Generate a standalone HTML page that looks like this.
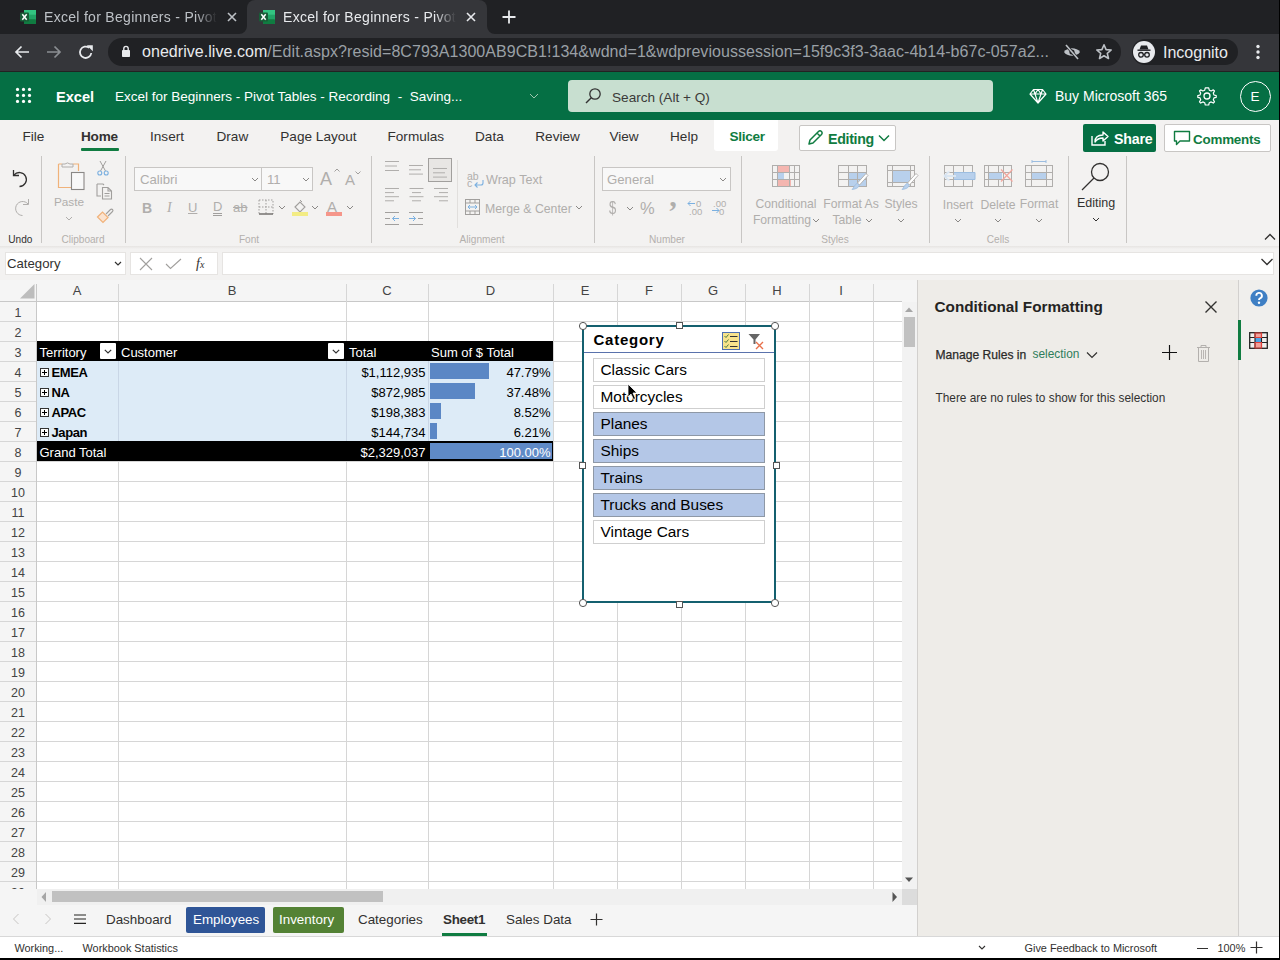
<!DOCTYPE html>
<html><head><meta charset="utf-8"><style>
html,body{margin:0;padding:0;}
body{width:1280px;height:960px;position:relative;overflow:hidden;background:#fff;font-family:"Liberation Sans",sans-serif;}
.a{position:absolute;white-space:nowrap;line-height:1;}
svg.a{overflow:visible}
</style></head><body>
<div class="a" style="left:0px;top:0px;width:1280px;height:34px;background:#202124;"></div>
<div class="a" style="left:0px;top:34px;width:1280px;height:38px;background:#35363a;"></div>
<div class="a" style="left:247px;top:0px;width:240px;height:34px;background:#35363a;border-radius:8px 8px 0 0;top:0px"></div>
<svg class="a" style="left:239px;top:26px;" width="8" height="8" viewBox="0 0 8 8"><path d="M0 8 A8 8 0 0 0 8 0 V8 Z" fill="#35363a"/></svg>
<svg class="a" style="left:487px;top:26px;" width="8" height="8" viewBox="0 0 8 8"><path d="M8 8 A8 8 0 0 1 0 0 V8 Z" fill="#35363a"/></svg>
<svg class="a" style="left:20px;top:9px;" width="16" height="16" viewBox="0 0 16 16"><rect x="4" y="1" width="12" height="14" rx="1.5" fill="#21a366"/><rect x="4" y="1" width="12" height="4.7" fill="#33c481"/><rect x="4" y="10.3" width="12" height="4.7" rx="1" fill="#107c41"/><rect x="0" y="3.5" width="9" height="9" rx="1" fill="#185c37"/><path d="M2.3 5.3 L6.7 10.7 M6.7 5.3 L2.3 10.7" stroke="#fff" stroke-width="1.5"/></svg>
<svg class="a" style="left:259px;top:9px;" width="16" height="16" viewBox="0 0 16 16"><rect x="4" y="1" width="12" height="14" rx="1.5" fill="#21a366"/><rect x="4" y="1" width="12" height="4.7" fill="#33c481"/><rect x="4" y="10.3" width="12" height="4.7" rx="1" fill="#107c41"/><rect x="0" y="3.5" width="9" height="9" rx="1" fill="#185c37"/><path d="M2.3 5.3 L6.7 10.7 M6.7 5.3 L2.3 10.7" stroke="#fff" stroke-width="1.5"/></svg>
<div class="a" style="left:44px;top:8px;font-size:14px;line-height:18px;color:#bdc1c6;width:173px;overflow:hidden;white-space:nowrap;letter-spacing:0.3px;-webkit-mask-image:linear-gradient(90deg,#000 88%,transparent)">Excel for Beginners - Pivot Tables</div>
<div class="a" style="left:283px;top:8px;font-size:14px;line-height:18px;color:#e8eaed;width:173px;overflow:hidden;white-space:nowrap;letter-spacing:0.3px;-webkit-mask-image:linear-gradient(90deg,#000 88%,transparent)">Excel for Beginners - Pivot Tables</div>
<svg class="a" style="left:225px;top:10px;" width="14" height="14" viewBox="0 0 14 14"><path d="M3 3 L11 11 M11 3 L3 11" stroke="#bdc1c6" stroke-width="1.6"/></svg>
<svg class="a" style="left:464px;top:10px;" width="14" height="14" viewBox="0 0 14 14"><path d="M3 3 L11 11 M11 3 L3 11" stroke="#e8eaed" stroke-width="1.6"/></svg>
<svg class="a" style="left:501px;top:9px;" width="16" height="16" viewBox="0 0 16 16"><path d="M8 1.5 V14.5 M1.5 8 H14.5" stroke="#e8eaed" stroke-width="1.8"/></svg>
<svg class="a" style="left:13px;top:43px;" width="18" height="18" viewBox="0 0 18 18"><path d="M16 9 H3 M8.5 3.5 L3 9 L8.5 14.5" stroke="#e8eaed" stroke-width="1.7" fill="none"/></svg>
<svg class="a" style="left:45px;top:43px;" width="18" height="18" viewBox="0 0 18 18"><path d="M2 9 H15 M9.5 3.5 L15 9 L9.5 14.5" stroke="#8b8e92" stroke-width="1.7" fill="none"/></svg>
<svg class="a" style="left:77px;top:43px;" width="18" height="18" viewBox="0 0 18 18"><path d="M14.3 10 A5.7 5.7 0 1 1 12.2 4.8" stroke="#e8eaed" stroke-width="1.8" fill="none"/><path d="M9.8 2.2 H15.8 V8.2 Z" fill="#e8eaed"/></svg>
<div class="a" style="left:108px;top:38px;width:1013px;height:28px;background:#202124;border-radius:14px"></div>
<svg class="a" style="left:120px;top:44px;" width="12" height="14" viewBox="0 0 12 14"><rect x="2" y="6" width="8" height="7" rx="0.8" fill="#e8eaed"/><path d="M3.8 6.5 V4.6 A2.2 2.2 0 0 1 8.2 4.6 V6.5" stroke="#e8eaed" stroke-width="1.4" fill="none"/></svg>
<div class="a" style="left:142px;top:42px;font-size:16px;line-height:20px;white-space:nowrap;color:#9aa0a6;letter-spacing:0.05px"><span style="color:#e8eaed">onedrive.live.com</span>/Edit.aspx?resid=8C793A1300AB9CB1!134&amp;wdnd=1&amp;wdprevioussession=15f9c3f3-3aac-4b14-b67c-057a2...</div>
<svg class="a" style="left:1062px;top:43px;" width="20" height="18" viewBox="0 0 20 18"><path d="M2 9 C5 4 15 4 18 9 C15 14 5 14 2 9 Z" fill="#bdc1c6"/><circle cx="10" cy="9" r="2.6" fill="#202124"/><path d="M4 2 L16 16" stroke="#202124" stroke-width="3"/><path d="M4 2 L16 16" stroke="#bdc1c6" stroke-width="1.6"/></svg>
<svg class="a" style="left:1095px;top:43px;" width="18" height="18" viewBox="0 0 18 18"><path d="M9 1.8 L11.1 6.6 L16.2 7 L12.3 10.4 L13.5 15.5 L9 12.8 L4.5 15.5 L5.7 10.4 L1.8 7 L6.9 6.6 Z" stroke="#bdc1c6" stroke-width="1.6" fill="none" stroke-linejoin="round"/></svg>
<div class="a" style="left:1132px;top:39px;width:106px;height:26px;background:#202124;border-radius:13px"></div>
<svg class="a" style="left:1133px;top:41px;" width="22" height="22" viewBox="0 0 22 22"><circle cx="11" cy="11" r="11" fill="#e8eaed"/><path d="M6.5 8.5 L8 4.5 H14 L15.5 8.5 Z" fill="#202124"/><rect x="4.5" y="8.5" width="13" height="1.4" fill="#202124"/><circle cx="8" cy="13.8" r="2.3" stroke="#202124" stroke-width="1.3" fill="none"/><circle cx="14" cy="13.8" r="2.3" stroke="#202124" stroke-width="1.3" fill="none"/><path d="M10.3 13.5 H11.7" stroke="#202124" stroke-width="1.2"/></svg>
<div class="a " style="left:1163px;top:44.5px;font-size:16px;color:#e8eaed;font-weight:400;">Incognito</div>
<svg class="a" style="left:1254px;top:43px;" width="8" height="18" viewBox="0 0 8 18"><circle cx="4" cy="3.5" r="1.7" fill="#e8eaed"/><circle cx="4" cy="9" r="1.7" fill="#e8eaed"/><circle cx="4" cy="14.5" r="1.7" fill="#e8eaed"/></svg>
<div class="a" style="left:0px;top:72px;width:1280px;height:48px;background:#056f44;"></div>
<div class="a" style="left:0px;top:71px;width:1280px;height:1px;background:#222;"></div>
<svg class="a" style="left:15px;top:87px;" width="17" height="17" viewBox="0 0 17 17"><circle cx="2.5" cy="2.4" r="1.6" fill="#fff"/><circle cx="2.5" cy="8.4" r="1.6" fill="#fff"/><circle cx="2.5" cy="14.4" r="1.6" fill="#fff"/><circle cx="8.5" cy="2.4" r="1.6" fill="#fff"/><circle cx="8.5" cy="8.4" r="1.6" fill="#fff"/><circle cx="8.5" cy="14.4" r="1.6" fill="#fff"/><circle cx="14.5" cy="2.4" r="1.6" fill="#fff"/><circle cx="14.5" cy="8.4" r="1.6" fill="#fff"/><circle cx="14.5" cy="14.4" r="1.6" fill="#fff"/></svg>
<div class="a " style="left:56px;top:89.6px;font-size:14.6px;color:#fff;font-weight:700;">Excel</div>
<div class="a " style="left:115px;top:89.6px;font-size:13.5px;color:#fff;font-weight:400;white-space:nowrap">Excel for Beginners - Pivot Tables - Recording &nbsp;- &nbsp;Saving...</div>
<svg class="a" style="left:529px;top:93px;" width="10" height="6" viewBox="0 0 10 6"><path d="M1 1 L5 5 L9 1" stroke="#9cc7ad" stroke-width="1" fill="none"/></svg>
<div class="a" style="left:568px;top:80px;width:425px;height:32px;background:#c8dfd0;border-radius:4px"></div>
<svg class="a" style="left:584px;top:87px;" width="18" height="18" viewBox="0 0 18 18"><circle cx="11" cy="7" r="5.2" stroke="#333" stroke-width="1.3" fill="none"/><path d="M7.3 10.7 L2 16" stroke="#333" stroke-width="1.4"/></svg>
<div class="a " style="left:612px;top:90.5px;font-size:13.6px;color:#3b3a39;font-weight:400;">Search (Alt + Q)</div>
<svg class="a" style="left:1029px;top:87px;" width="18" height="18" viewBox="0 0 18 18"><path d="M4.5 2.5 H13.5 L17 7 L9 16 L1 7 Z M1 7 H17 M6 7 L9 16 L12 7 M4.5 2.5 L6 7 L9 2.5 L12 7 L13.5 2.5" stroke="#fff" stroke-width="1.2" fill="none" stroke-linejoin="round"/></svg>
<div class="a " style="left:1055px;top:89.1px;font-size:14px;color:#fff;font-weight:400;">Buy Microsoft 365</div>
<svg class="a" style="left:1197px;top:86px;" width="20" height="20" viewBox="0 0 20 20"><circle cx="10" cy="10" r="3" stroke="#fff" stroke-width="1.3" fill="none"/><path d="M10 1.8 L11.7 1.9 L12.3 4.2 L14.2 5 L16.3 3.8 L17.5 5 L16.3 7.1 L17 9 L19.2 9.6 V11.3 L17 11.9 L16.3 13.8 L17.5 15.9 L16.3 17.1 L14.2 15.9 L12.3 16.7 L11.7 19 H10 H8.3 L7.7 16.7 L5.8 15.9 L3.7 17.1 L2.5 15.9 L3.7 13.8 L3 11.9 L0.8 11.3 V9.6 L3 9 L3.7 7.1 L2.5 5 L3.7 3.8 L5.8 5 L7.7 4.2 L8.3 1.9 Z" stroke="#fff" stroke-width="1.2" fill="none" stroke-linejoin="round"/></svg>
<div class="a" style="left:1239.5px;top:80.5px;width:31px;height:31px;background:transparent;border:1.3px solid #fff;border-radius:50%;box-sizing:border-box"></div>
<div class="a" style="left:1105px;width:300px;text-align:center;top:90.1px;font-size:13.5px;color:#fff;font-weight:400;">E</div>
<div class="a" style="left:0px;top:120px;width:1280px;height:160px;background:#f3f2f1;"></div>
<div class="a " style="left:22.5px;top:130.0px;font-size:13.6px;color:#323130;font-weight:400;">File</div>
<div class="a " style="left:81px;top:130.0px;font-size:13.6px;color:#323130;font-weight:700;letter-spacing:-0.2px">Home</div>
<div class="a " style="left:150px;top:130.0px;font-size:13.6px;color:#323130;font-weight:400;">Insert</div>
<div class="a " style="left:216.5px;top:130.0px;font-size:13.6px;color:#323130;font-weight:400;">Draw</div>
<div class="a " style="left:280.3px;top:130.0px;font-size:13.6px;color:#323130;font-weight:400;">Page Layout</div>
<div class="a " style="left:387.5px;top:130.0px;font-size:13.6px;color:#323130;font-weight:400;">Formulas</div>
<div class="a " style="left:475px;top:130.0px;font-size:13.6px;color:#323130;font-weight:400;">Data</div>
<div class="a " style="left:535.3px;top:130.0px;font-size:13.6px;color:#323130;font-weight:400;">Review</div>
<div class="a " style="left:609.4px;top:130.0px;font-size:13.6px;color:#323130;font-weight:400;">View</div>
<div class="a " style="left:670px;top:130.0px;font-size:13.6px;color:#323130;font-weight:400;">Help</div>
<div class="a" style="left:81px;top:148px;width:38px;height:3px;background:#107c41;border-radius:1px"></div>
<div class="a" style="left:714px;top:120px;width:64px;height:31px;background:#fff;border-radius:0 0 3px 3px"></div>
<div class="a " style="left:729.5px;top:130.0px;font-size:13.6px;color:#107c41;font-weight:700;letter-spacing:-0.3px">Slicer</div>
<div class="a" style="left:799px;top:125px;width:97px;height:26px;background:#fff;border:1px solid #c8c6c4;border-radius:2px;box-sizing:border-box"></div>
<svg class="a" style="left:806px;top:129px;" width="18" height="18" viewBox="0 0 18 18"><path d="M3 15 L4 11 L12.5 2.5 A1.6 1.6 0 0 1 15.5 5.5 L7 14 Z M11 4 L14 7" stroke="#107c41" stroke-width="1.5" fill="none" stroke-linejoin="round"/></svg>
<div class="a " style="left:828px;top:132.0px;font-size:14.2px;color:#107c41;font-weight:700;letter-spacing:-0.3px">Editing</div>
<svg class="a" style="left:878px;top:134px;" width="12" height="8" viewBox="0 0 12 8"><path d="M1 1.5 L6 6.5 L11 1.5" stroke="#107c41" stroke-width="1.5" fill="none"/></svg>
<div class="a" style="left:1083px;top:124px;width:73px;height:28px;background:#056f44;border-radius:2px"></div>
<svg class="a" style="left:1090px;top:129px;" width="20" height="18" viewBox="0 0 20 18"><path d="M2 7 V16 H15 V12" stroke="#fff" stroke-width="1.4" fill="none"/><path d="M5 13 C5 8 8 6 13 6 V3 L18 7.5 L13 12 V9 C9 9 7 10 5 13 Z" stroke="#fff" stroke-width="1.4" fill="none" stroke-linejoin="round"/></svg>
<div class="a " style="left:1114px;top:132.0px;font-size:14.2px;color:#fff;font-weight:700;letter-spacing:-0.2px">Share</div>
<div class="a" style="left:1164px;top:124px;width:107px;height:28px;background:#fff;border:1px solid #c8c6c4;border-radius:2px;box-sizing:border-box"></div>
<svg class="a" style="left:1173px;top:129px;" width="18" height="18" viewBox="0 0 18 18"><path d="M1.5 2.5 H16.5 V12 H7 L3.5 15.5 V12 H1.5 Z" stroke="#107c41" stroke-width="1.4" fill="none" stroke-linejoin="round"/></svg>
<div class="a " style="left:1193px;top:132.7px;font-size:13.4px;color:#107c41;font-weight:700;letter-spacing:-0.2px">Comments</div>
<div class="a" style="left:41px;top:156px;width:1px;height:87px;background:#c8c6c4;"></div>
<div class="a" style="left:125px;top:156px;width:1px;height:87px;background:#c8c6c4;"></div>
<div class="a" style="left:371px;top:156px;width:1px;height:87px;background:#c8c6c4;"></div>
<div class="a" style="left:594px;top:156px;width:1px;height:87px;background:#c8c6c4;"></div>
<div class="a" style="left:741px;top:156px;width:1px;height:87px;background:#c8c6c4;"></div>
<div class="a" style="left:929px;top:156px;width:1px;height:87px;background:#c8c6c4;"></div>
<div class="a" style="left:1068px;top:156px;width:1px;height:87px;background:#c8c6c4;"></div>
<div class="a" style="left:1126px;top:156px;width:1px;height:87px;background:#c8c6c4;"></div>
<div class="a" style="left:457px;top:160px;width:1px;height:68px;background:#e1dfdd;"></div>
<div class="a " style="left:8.3px;top:234.5px;font-size:10.1px;color:#323130;font-weight:400;">Undo</div>
<div class="a" style="left:-67px;width:300px;text-align:center;top:234.5px;font-size:10.1px;color:#b3b0ad;font-weight:400;">Clipboard</div>
<div class="a" style="left:99px;width:300px;text-align:center;top:234.5px;font-size:10.1px;color:#b3b0ad;font-weight:400;">Font</div>
<div class="a" style="left:332px;width:300px;text-align:center;top:234.5px;font-size:10.1px;color:#b3b0ad;font-weight:400;">Alignment</div>
<div class="a" style="left:517px;width:300px;text-align:center;top:234.5px;font-size:10.1px;color:#b3b0ad;font-weight:400;">Number</div>
<div class="a" style="left:685px;width:300px;text-align:center;top:234.5px;font-size:10.1px;color:#b3b0ad;font-weight:400;">Styles</div>
<div class="a" style="left:848px;width:300px;text-align:center;top:234.5px;font-size:10.1px;color:#b3b0ad;font-weight:400;">Cells</div>
<svg class="a" style="left:1264px;top:233px;" width="12" height="8" viewBox="0 0 12 8"><path d="M1 6.5 L6 1.5 L11 6.5" stroke="#323130" stroke-width="1.3" fill="none"/></svg>
<svg class="a" style="left:10px;top:168px;" width="22" height="22" viewBox="0 0 22 22"><path d="M3.5 2 V7.5 H9" stroke="#323130" stroke-width="1.3" fill="none"/><path d="M4 7 A7 7 0 1 1 9.5 18.5" stroke="#323130" stroke-width="1.3" fill="none"/></svg>
<svg class="a" style="left:10px;top:197px;" width="22" height="22" viewBox="0 0 22 22"><path d="M18.5 2 V7.5 H13" stroke="#b0aeac" stroke-width="1" fill="none"/><path d="M18 7 A7 7 0 1 0 12.5 18.5" stroke="#b0aeac" stroke-width="1" fill="none"/></svg>
<svg class="a" style="left:56px;top:158px;" width="32" height="33" viewBox="0 0 32 33"><path d="M2.5 6 H6 M17 6 H22.5 V13" stroke="#f0b27a" stroke-width="1.2" fill="none"/><path d="M2.5 6 V29.5 H15" stroke="#f0b27a" stroke-width="1.2" fill="none"/><path d="M6 9 V6 H9 A3.5 3 0 0 1 14 6 H17 V9 Z" stroke="#b0aeac" stroke-width="1" fill="#f3f2f1"/><rect x="15.5" y="14.5" width="12.5" height="17" stroke="#8a8886" stroke-width="1.1" fill="#f8f8f8"/></svg>
<div class="a" style="left:-81px;width:300px;text-align:center;top:197.0px;font-size:11.8px;color:#b0aeac;font-weight:400;">Paste</div>
<svg class="a" style="left:65px;top:216px;" width="8" height="5" viewBox="0 0 8 5"><path d="M1 1 L4 4 L7 1" stroke="#b0aeac" stroke-width="1" fill="none"/></svg>
<svg class="a" style="left:96px;top:160px;" width="14" height="16" viewBox="0 0 14 16"><path d="M4 1 L9.5 11 M10 1 L4.5 11" stroke="#a19f9d" stroke-width="1"/><circle cx="3.8" cy="13" r="2" stroke="#7bb0e0" stroke-width="1.1" fill="none"/><circle cx="10.2" cy="13" r="2" stroke="#7bb0e0" stroke-width="1.1" fill="none"/></svg>
<svg class="a" style="left:96px;top:183px;" width="18" height="17" viewBox="0 0 18 17"><path d="M1 1 H7 L8 2 M1 1 V13 H5" stroke="#a19f9d" stroke-width="1.1" fill="none"/><path d="M6.5 4.5 H12 L15.5 8 V16 H6.5 Z M12 4.5 V8 H15.5 M8.5 10.5 H13.5 M8.5 13 H13.5" stroke="#a19f9d" stroke-width="1.1" fill="none"/></svg>
<svg class="a" style="left:96px;top:206px;" width="18" height="17" viewBox="0 0 18 17"><path d="M10 8 L14.5 3.5 A1.4 1.4 0 0 1 16.5 5.5 L12 10" stroke="#a19f9d" stroke-width="1.1" fill="none"/><path d="M1.5 11 L6.5 6 L12 11.5 L7 16.5 Z" stroke="#f0b27a" stroke-width="1.2" fill="#fbe3cf"/></svg>
<div class="a" style="left:134px;top:167px;width:179px;height:24px;background:#f8f8f8;border:1px solid #c8c6c4;box-sizing:border-box"></div>
<div class="a" style="left:261px;top:168px;width:1px;height:22px;background:#c8c6c4;"></div>
<div class="a " style="left:140px;top:172.8px;font-size:13.2px;color:#b0aeac;font-weight:400;">Calibri</div>
<div class="a " style="left:267px;top:172.8px;font-size:13.2px;color:#b0aeac;font-weight:400;">11</div>
<svg class="a" style="left:251px;top:177px;" width="8" height="5" viewBox="0 0 8 5"><path d="M1 1 L4 4 L7 1" stroke="#8a8886" stroke-width="1" fill="none"/></svg>
<svg class="a" style="left:302px;top:177px;" width="8" height="5" viewBox="0 0 8 5"><path d="M1 1 L4 4 L7 1" stroke="#8a8886" stroke-width="1" fill="none"/></svg>
<div class="a " style="left:320px;top:169.8px;font-size:18px;color:#b0aeac;font-weight:400;">A</div>
<svg class="a" style="left:334px;top:168px;" width="6" height="4" viewBox="0 0 6 4"><path d="M0.5 3.5 L3 1 L5.5 3.5" stroke="#a19f9d" fill="none"/></svg>
<div class="a " style="left:345px;top:172.3px;font-size:15px;color:#b0aeac;font-weight:400;">A</div>
<svg class="a" style="left:355px;top:171px;" width="6" height="4" viewBox="0 0 6 4"><path d="M0.5 0.5 L3 3 L5.5 0.5" stroke="#a19f9d" fill="none"/></svg>
<div class="a " style="left:142px;top:201.1px;font-size:14px;color:#b0aeac;font-weight:700;">B</div>
<div class="a " style="left:167px;top:201.1px;font-size:14px;color:#b0aeac;font-weight:400;font-style:italic;font-family:&quot;Liberation Serif&quot;">I</div>
<div class="a " style="left:188px;top:201.0px;font-size:13px;color:#b0aeac;font-weight:400;text-decoration:underline">U</div>
<div class="a " style="left:213px;top:201.0px;font-size:13px;color:#b0aeac;font-weight:400;border-bottom:3px double #a19f9d;line-height:12px">D</div>
<div class="a " style="left:233px;top:201.0px;font-size:13px;color:#b0aeac;font-weight:400;text-decoration:line-through">ab</div>
<svg class="a" style="left:258px;top:199px;" width="16" height="16" viewBox="0 0 16 16"><path d="M1 1 H15 V15 M1 1 V15 M8 1 V15 M1 8 H15" stroke="#a19f9d" stroke-width="1" stroke-dasharray="1.5 1.5" fill="none"/><path d="M1 15 H15" stroke="#605e5c" stroke-width="1.3"/></svg>
<svg class="a" style="left:278px;top:205px;" width="8" height="5" viewBox="0 0 8 5"><path d="M1 1 L4 4 L7 1" stroke="#8a8886" stroke-width="1" fill="none"/></svg>
<svg class="a" style="left:291px;top:198px;" width="18" height="18" viewBox="0 0 18 18"><path d="M4 9 L9 4 L14 9 L9 14 Z" stroke="#a19f9d" stroke-width="1.1" fill="none"/><path d="M9 2 L11 4" stroke="#a19f9d"/><rect x="1" y="14" width="16" height="4" fill="#f3ec85"/></svg>
<svg class="a" style="left:311px;top:205px;" width="8" height="5" viewBox="0 0 8 5"><path d="M1 1 L4 4 L7 1" stroke="#8a8886" stroke-width="1" fill="none"/></svg>
<div class="a " style="left:327px;top:199.3px;font-size:15px;color:#b0aeac;font-weight:400;">A</div>
<div class="a" style="left:326px;top:212px;width:16px;height:4px;background:#f5968a;"></div>
<svg class="a" style="left:346px;top:205px;" width="8" height="5" viewBox="0 0 8 5"><path d="M1 1 L4 4 L7 1" stroke="#8a8886" stroke-width="1" fill="none"/></svg>
<svg class="a" style="left:385px;top:161px;" width="16" height="15.5" viewBox="0 0 16 15.5"><path d="M0 0.5 H14" stroke="#b0aeac" stroke-width="1"/><path d="M0 5.0 H12" stroke="#b0aeac" stroke-width="1"/><path d="M0 9.5 H14" stroke="#b0aeac" stroke-width="1"/></svg>
<svg class="a" style="left:409px;top:165px;" width="16" height="14.899999999999999" viewBox="0 0 16 14.899999999999999"><path d="M0 0.5 H14" stroke="#b0aeac" stroke-width="1"/><path d="M0 4.8 H12" stroke="#b0aeac" stroke-width="1"/><path d="M0 9.1 H14" stroke="#b0aeac" stroke-width="1"/></svg>
<div class="a" style="left:428px;top:158px;width:24px;height:24px;background:#e8e6e4;border:1px solid #a19f9d;box-sizing:border-box"></div>
<svg class="a" style="left:433px;top:168px;" width="16" height="14.899999999999999" viewBox="0 0 16 14.899999999999999"><path d="M0 0.5 H14" stroke="#b0aeac" stroke-width="1"/><path d="M0 4.8 H12" stroke="#b0aeac" stroke-width="1"/><path d="M0 9.1 H14" stroke="#b0aeac" stroke-width="1"/></svg>
<svg class="a" style="left:385px;top:188px;" width="16" height="18.4" viewBox="0 0 16 18.4"><path d="M0 0.5 H14" stroke="#b0aeac" stroke-width="1"/><path d="M0 4.6 H9" stroke="#b0aeac" stroke-width="1"/><path d="M0 8.7 H14" stroke="#b0aeac" stroke-width="1"/><path d="M0 12.799999999999999 H9" stroke="#b0aeac" stroke-width="1"/></svg>
<svg class="a" style="left:409px;top:188px;" width="16" height="18.4" viewBox="0 0 16 18.4"><path d="M0.5 0.5 H14.5" stroke="#b0aeac" stroke-width="1"/><path d="M3.0 4.6 H12.0" stroke="#b0aeac" stroke-width="1"/><path d="M0.5 8.7 H14.5" stroke="#b0aeac" stroke-width="1"/><path d="M3.0 12.799999999999999 H12.0" stroke="#b0aeac" stroke-width="1"/></svg>
<svg class="a" style="left:433px;top:188px;" width="16" height="18.4" viewBox="0 0 16 18.4"><path d="M1 0.5 H15" stroke="#b0aeac" stroke-width="1"/><path d="M6 4.6 H15" stroke="#b0aeac" stroke-width="1"/><path d="M1 8.7 H15" stroke="#b0aeac" stroke-width="1"/><path d="M6 12.799999999999999 H15" stroke="#b0aeac" stroke-width="1"/></svg>
<svg class="a" style="left:385px;top:212px;" width="16" height="14" viewBox="0 0 16 14"><path d="M0 0.5 H14 M0 6.5 H5 M0 12.5 H14" stroke="#a19f9d"/><path d="M14 6.5 H7.5 M10 4 L7.5 6.5 L10 9" stroke="#7bb0e0" fill="none"/></svg>
<svg class="a" style="left:409px;top:212px;" width="16" height="14" viewBox="0 0 16 14"><path d="M0 0.5 H14 M9 6.5 H14 M0 12.5 H14" stroke="#a19f9d"/><path d="M0 6.5 H6.5 M4 4 L6.5 6.5 L4 9" stroke="#7bb0e0" fill="none"/></svg>
<div class="a " style="left:467px;top:170.6px;font-size:10.5px;color:#b0aeac;font-weight:400;">ab</div>
<div class="a " style="left:467px;top:177.6px;font-size:10.5px;color:#b0aeac;font-weight:400;">c</div>
<svg class="a" style="left:473px;top:179px;" width="12" height="9" viewBox="0 0 12 9"><path d="M10 1 V4 A2 2 0 0 1 8 6 H2 M4.5 3.5 L2 6 L4.5 8.5" stroke="#7bb0e0" stroke-width="1.1" fill="none"/></svg>
<div class="a " style="left:486px;top:174.3px;font-size:12.6px;color:#b0aeac;font-weight:400;">Wrap Text</div>
<svg class="a" style="left:465px;top:199px;" width="16" height="17" viewBox="0 0 16 17"><rect x="0.5" y="0.5" width="14" height="15" stroke="#a19f9d" fill="none"/><path d="M0.5 4 H14.5 M0.5 12 H14.5 M5 0.5 V4 M10 0.5 V4 M5 12 V15.5 M10 12 V15.5" stroke="#a19f9d"/><path d="M3 8 H12 M5 6 L3 8 L5 10 M10 6 L12 8 L10 10" stroke="#7bb0e0" fill="none"/></svg>
<div class="a " style="left:485px;top:202.6px;font-size:12.3px;color:#b0aeac;font-weight:400;">Merge &amp; Center</div>
<svg class="a" style="left:575px;top:205px;" width="8" height="5" viewBox="0 0 8 5"><path d="M1 1 L4 4 L7 1" stroke="#8a8886" stroke-width="1" fill="none"/></svg>
<div class="a" style="left:602px;top:167px;width:129px;height:24px;background:#f8f8f8;border:1px solid #c8c6c4;box-sizing:border-box"></div>
<div class="a " style="left:607px;top:172.8px;font-size:13.2px;color:#b0aeac;font-weight:400;">General</div>
<svg class="a" style="left:719px;top:177px;" width="8" height="5" viewBox="0 0 8 5"><path d="M1 1 L4 4 L7 1" stroke="#8a8886" stroke-width="1" fill="none"/></svg>
<div class="a " style="left:609px;top:199.3px;font-size:18px;color:#b0aeac;font-weight:400;transform:scaleX(0.72);transform-origin:left">$</div>
<svg class="a" style="left:626px;top:206px;" width="8" height="5" viewBox="0 0 8 5"><path d="M1 1 L4 4 L7 1" stroke="#8a8886" stroke-width="1" fill="none"/></svg>
<div class="a " style="left:640px;top:199.5px;font-size:16.5px;color:#b0aeac;font-weight:400;">%</div>
<div class="a " style="left:668px;top:180.6px;font-size:30px;color:#b0aeac;font-weight:700;font-family:&quot;Liberation Serif&quot;">‚</div>
<svg class="a" style="left:687px;top:199px;" width="18" height="17" viewBox="0 0 18 17"><path d="M1 4.5 H8 M3.5 2 L1 4.5 L3.5 7" stroke="#7bb0e0" fill="none"/></svg>
<div class="a " style="left:696px;top:199.0px;font-size:9.5px;color:#b0aeac;font-weight:400;">0</div>
<div class="a " style="left:689px;top:207.0px;font-size:9.5px;color:#b0aeac;font-weight:400;">.00</div>
<div class="a " style="left:713px;top:199.0px;font-size:9.5px;color:#b0aeac;font-weight:400;">.00</div>
<div class="a " style="left:719px;top:207.0px;font-size:9.5px;color:#b0aeac;font-weight:400;">0</div>
<svg class="a" style="left:711px;top:206px;" width="10" height="9" viewBox="0 0 10 9"><path d="M1 4.5 H8 M5.5 2 L8 4.5 L5.5 7" stroke="#7bb0e0" fill="none"/></svg>
<svg class="a" style="left:772px;top:165px;" width="28" height="23" viewBox="0 0 28 23"><rect x="5" y="0" width="12" height="7" fill="#f4b6b0"/><rect x="5" y="15" width="14" height="7" fill="#f4b6b0"/><rect x="5" y="7" width="7" height="7.5" fill="#b8d0ec"/><rect x="0.5" y="0.5" width="27" height="21" fill="none" stroke="#b0aeac"/><path d="M5.5 0 V22 M17.5 0 V22 M22.5 0 V22 M0 7.5 H28 M0 14.5 H28" stroke="#b0aeac"/></svg>
<div class="a" style="left:636px;width:300px;text-align:center;top:197.7px;font-size:12.2px;color:#b0aeac;font-weight:400;">Conditional</div>
<div class="a" style="left:632px;width:300px;text-align:center;top:213.7px;font-size:12.2px;color:#b0aeac;font-weight:400;">Formatting</div>
<svg class="a" style="left:812px;top:218px;" width="8" height="5" viewBox="0 0 8 5"><path d="M1 1 L4 4 L7 1" stroke="#8a8886" stroke-width="1" fill="none"/></svg>
<svg class="a" style="left:838px;top:165px;" width="32" height="28" viewBox="0 0 32 28"><rect x="10" y="7" width="18" height="15" fill="#b8d0ec"/><rect x="0.5" y="0.5" width="28" height="21" fill="none" stroke="#b0aeac"/><path d="M10.5 0 V22" stroke="#b0aeac"/><path d="M19.5 0 V22" stroke="#b0aeac"/><path d="M0 7.5 H29" stroke="#b0aeac"/><path d="M0 14.5 H29" stroke="#b0aeac"/><g transform="translate(16,8)"><path d="M12 0.5 L14 2.5 L5.5 12 L3.5 10 Z" fill="#fff" stroke="#b0aeac" stroke-width="0.9"/><path d="M3.2 10.3 L5.3 12.3 C4.5 15 2 16 -2 16.5 C0 15 0 12 3.2 10.3 Z" fill="#b8d0ec" stroke="#9cbde0" stroke-width="0.8"/></g></svg>
<div class="a" style="left:701px;width:300px;text-align:center;top:197.7px;font-size:12.2px;color:#b0aeac;font-weight:400;">Format As</div>
<div class="a" style="left:697px;width:300px;text-align:center;top:213.7px;font-size:12.2px;color:#b0aeac;font-weight:400;">Table</div>
<svg class="a" style="left:865px;top:218px;" width="8" height="5" viewBox="0 0 8 5"><path d="M1 1 L4 4 L7 1" stroke="#8a8886" stroke-width="1" fill="none"/></svg>
<svg class="a" style="left:887px;top:165px;" width="32" height="28" viewBox="0 0 32 28"><rect x="5" y="5" width="18" height="12" fill="#b8d0ec"/><rect x="0.5" y="0.5" width="27" height="21" fill="none" stroke="#b0aeac"/><path d="M5.5 0 V22" stroke="#b0aeac"/><path d="M23.5 0 V22" stroke="#b0aeac"/><path d="M0 5.5 H28" stroke="#b0aeac"/><path d="M0 17.5 H28" stroke="#b0aeac"/><g transform="translate(17,8)"><path d="M12 0.5 L14 2.5 L5.5 12 L3.5 10 Z" fill="#fff" stroke="#b0aeac" stroke-width="0.9"/><path d="M3.2 10.3 L5.3 12.3 C4.5 15 2 16 -2 16.5 C0 15 0 12 3.2 10.3 Z" fill="#b8d0ec" stroke="#9cbde0" stroke-width="0.8"/></g></svg>
<div class="a" style="left:751px;width:300px;text-align:center;top:197.7px;font-size:12.2px;color:#b0aeac;font-weight:400;">Styles</div>
<svg class="a" style="left:897px;top:218px;" width="8" height="5" viewBox="0 0 8 5"><path d="M1 1 L4 4 L7 1" stroke="#8a8886" stroke-width="1" fill="none"/></svg>
<svg class="a" style="left:944px;top:165px;" width="32" height="22" viewBox="0 0 32 22"><rect x="0.5" y="0.5" width="28" height="21" fill="none" stroke="#b0aeac"/><path d="M9.5 0 V22" stroke="#b0aeac"/><path d="M19.5 0 V22" stroke="#b0aeac"/><path d="M0 7.5 H29" stroke="#b0aeac"/><path d="M0 14.5 H29" stroke="#b0aeac"/><rect x="10" y="8" width="21" height="6" fill="#b8d0ec"/><path d="M10 7.5 H31 V14.5 H10" fill="none" stroke="#9cbde0"/><path d="M1 11 H12 M5 6.5 L0.5 11 L5 15.5" stroke="#e6eef7" stroke-width="2.2" fill="none"/><path d="M1 11 H12 M5 6.5 L0.5 11 L5 15.5" stroke="#c9d9ea" stroke-width="0.8" fill="none"/></svg>
<div class="a" style="left:808px;width:300px;text-align:center;top:198.7px;font-size:12.2px;color:#b0aeac;font-weight:400;">Insert</div>
<svg class="a" style="left:954px;top:218px;" width="8" height="5" viewBox="0 0 8 5"><path d="M1 1 L4 4 L7 1" stroke="#8a8886" stroke-width="1" fill="none"/></svg>
<svg class="a" style="left:984px;top:165px;" width="32" height="22" viewBox="0 0 32 22"><rect x="0.5" y="0.5" width="27" height="21" fill="none" stroke="#b0aeac"/><path d="M4.5 0 V22" stroke="#b0aeac"/><path d="M14.5 0 V22" stroke="#b0aeac"/><path d="M19.5 0 V22" stroke="#b0aeac"/><path d="M0 7.5 H28" stroke="#b0aeac"/><path d="M0 14.5 H28" stroke="#b0aeac"/><rect x="5" y="8" width="13" height="6" fill="#b8d0ec"/><path d="M17 4.5 L28.5 16.5 M28.5 4.5 L17 16.5" stroke="#f3a59c" stroke-width="1.1"/></svg>
<div class="a" style="left:848px;width:300px;text-align:center;top:198.7px;font-size:12.2px;color:#b0aeac;font-weight:400;">Delete</div>
<svg class="a" style="left:994px;top:218px;" width="8" height="5" viewBox="0 0 8 5"><path d="M1 1 L4 4 L7 1" stroke="#8a8886" stroke-width="1" fill="none"/></svg>
<svg class="a" style="left:1025px;top:160px;" width="29" height="28" viewBox="0 0 29 28"><path d="M7 1.5 H21 M7 0 V3 M21 0 V3" stroke="#9cbde0"/><g transform="translate(0,5)"><rect x="7" y="7" width="14" height="7" fill="#b8d0ec"/><rect x="0.5" y="0.5" width="27" height="21" fill="none" stroke="#b0aeac"/><path d="M6.5 0 V22" stroke="#b0aeac"/><path d="M21.5 0 V22" stroke="#b0aeac"/><path d="M0 7.5 H28" stroke="#b0aeac"/><path d="M0 14.5 H28" stroke="#b0aeac"/></g></svg>
<div class="a" style="left:889px;width:300px;text-align:center;top:197.7px;font-size:12.2px;color:#b0aeac;font-weight:400;">Format</div>
<svg class="a" style="left:1035px;top:218px;" width="8" height="5" viewBox="0 0 8 5"><path d="M1 1 L4 4 L7 1" stroke="#8a8886" stroke-width="1" fill="none"/></svg>
<svg class="a" style="left:1080px;top:161px;" width="32" height="32" viewBox="0 0 32 32"><circle cx="20" cy="11" r="8.5" stroke="#323130" stroke-width="1.3" fill="none"/><path d="M14 17 L2 29" stroke="#323130" stroke-width="1.3"/></svg>
<div class="a" style="left:946px;width:300px;text-align:center;top:197.4px;font-size:12.5px;color:#323130;font-weight:400;">Editing</div>
<svg class="a" style="left:1092px;top:217px;" width="8" height="5" viewBox="0 0 8 5"><path d="M1 1 L4 4 L7 1" stroke="#323130" stroke-width="1" fill="none"/></svg>
<div class="a" style="left:0px;top:246px;width:1280px;height:3px;background:linear-gradient(#e6e4e2,#f3f2f1);"></div>
<div class="a" style="left:5px;top:252px;width:121px;height:23px;background:#fff;border:1px solid #e6e4e2;box-sizing:border-box"></div>
<div class="a " style="left:7px;top:257.3px;font-size:13.2px;color:#323130;font-weight:400;">Category</div>
<svg class="a" style="left:114px;top:261px;" width="8" height="6" viewBox="0 0 8 6"><path d="M1 1 L4 4 L7 1" stroke="#323130" stroke-width="1.2" fill="none"/></svg>
<div class="a" style="left:130px;top:252px;width:88px;height:23px;background:#fff;border:1px solid #e6e4e2;box-sizing:border-box"></div>
<svg class="a" style="left:139px;top:257px;" width="14" height="14" viewBox="0 0 14 14"><path d="M1 1 L13 13 M13 1 L1 13" stroke="#a19f9d" stroke-width="1.1"/></svg>
<svg class="a" style="left:165px;top:258px;" width="17" height="12" viewBox="0 0 17 12"><path d="M1 6 L5.5 10.5 L16 1" stroke="#a19f9d" stroke-width="1.1" fill="none"/></svg>
<div class="a " style="left:196px;top:256.6px;font-size:14px;color:#323130;font-weight:400;font-style:italic;font-family:&quot;Liberation Serif&quot;">f<span style="font-size:10px">x</span></div>
<div class="a" style="left:222px;top:252px;width:1052px;height:23px;background:#fff;border:1px solid #e6e4e2;box-sizing:border-box"></div>
<svg class="a" style="left:1260px;top:257px;" width="14" height="10" viewBox="0 0 14 10"><path d="M1.5 2 L7 7.5 L12.5 2" stroke="#323130" stroke-width="1.3" fill="none"/></svg>
<div class="a" style="left:0px;top:280px;width:917px;height:609px;background:#f5f5f5;"></div>
<div class="a" style="left:37px;top:302px;width:865px;height:587px;background:#fff;"></div>
<div class="a" style="left:0px;top:302px;width:902px;height:587px;background:repeating-linear-gradient(180deg,transparent 0,transparent 19px,#d6d6d6 19px,#d6d6d6 20px);"></div>
<div class="a" style="left:0px;top:301px;width:902px;height:1px;background:#c8c8c8;"></div>
<div class="a" style="left:36px;top:284px;width:1px;height:605px;background:#c8c8c8;"></div>
<div class="a" style="left:118px;top:284px;width:1px;height:605px;background:#d6d6d6;"></div>
<div class="a" style="left:346px;top:284px;width:1px;height:605px;background:#d6d6d6;"></div>
<div class="a" style="left:428px;top:284px;width:1px;height:605px;background:#d6d6d6;"></div>
<div class="a" style="left:553px;top:284px;width:1px;height:605px;background:#d6d6d6;"></div>
<div class="a" style="left:617px;top:284px;width:1px;height:605px;background:#d6d6d6;"></div>
<div class="a" style="left:681px;top:284px;width:1px;height:605px;background:#d6d6d6;"></div>
<div class="a" style="left:745px;top:284px;width:1px;height:605px;background:#d6d6d6;"></div>
<div class="a" style="left:809px;top:284px;width:1px;height:605px;background:#d6d6d6;"></div>
<div class="a" style="left:873px;top:284px;width:1px;height:605px;background:#d6d6d6;"></div>
<svg class="a" style="left:20px;top:284px;" width="15" height="15" viewBox="0 0 15 15"><path d="M14.5 0 V14.5 H0 Z" fill="#bdbdbd"/></svg>
<div class="a" style="left:-73px;width:300px;text-align:center;top:283.8px;font-size:13px;color:#444;font-weight:400;">A</div>
<div class="a" style="left:82px;width:300px;text-align:center;top:283.8px;font-size:13px;color:#444;font-weight:400;">B</div>
<div class="a" style="left:237px;width:300px;text-align:center;top:283.8px;font-size:13px;color:#444;font-weight:400;">C</div>
<div class="a" style="left:340.5px;width:300px;text-align:center;top:283.8px;font-size:13px;color:#444;font-weight:400;">D</div>
<div class="a" style="left:435px;width:300px;text-align:center;top:283.8px;font-size:13px;color:#444;font-weight:400;">E</div>
<div class="a" style="left:499px;width:300px;text-align:center;top:283.8px;font-size:13px;color:#444;font-weight:400;">F</div>
<div class="a" style="left:563px;width:300px;text-align:center;top:283.8px;font-size:13px;color:#444;font-weight:400;">G</div>
<div class="a" style="left:627px;width:300px;text-align:center;top:283.8px;font-size:13px;color:#444;font-weight:400;">H</div>
<div class="a" style="left:691px;width:300px;text-align:center;top:283.8px;font-size:13px;color:#444;font-weight:400;">I</div>
<div class="a" style="left:-132px;width:300px;text-align:center;top:306.6px;font-size:12.5px;color:#444;font-weight:400;">1</div>
<div class="a" style="left:-132px;width:300px;text-align:center;top:326.6px;font-size:12.5px;color:#444;font-weight:400;">2</div>
<div class="a" style="left:-132px;width:300px;text-align:center;top:346.6px;font-size:12.5px;color:#444;font-weight:400;">3</div>
<div class="a" style="left:-132px;width:300px;text-align:center;top:366.6px;font-size:12.5px;color:#444;font-weight:400;">4</div>
<div class="a" style="left:-132px;width:300px;text-align:center;top:386.6px;font-size:12.5px;color:#444;font-weight:400;">5</div>
<div class="a" style="left:-132px;width:300px;text-align:center;top:406.6px;font-size:12.5px;color:#444;font-weight:400;">6</div>
<div class="a" style="left:-132px;width:300px;text-align:center;top:426.6px;font-size:12.5px;color:#444;font-weight:400;">7</div>
<div class="a" style="left:-132px;width:300px;text-align:center;top:446.6px;font-size:12.5px;color:#444;font-weight:400;">8</div>
<div class="a" style="left:-132px;width:300px;text-align:center;top:466.6px;font-size:12.5px;color:#444;font-weight:400;">9</div>
<div class="a" style="left:-132px;width:300px;text-align:center;top:486.6px;font-size:12.5px;color:#444;font-weight:400;">10</div>
<div class="a" style="left:-132px;width:300px;text-align:center;top:506.6px;font-size:12.5px;color:#444;font-weight:400;">11</div>
<div class="a" style="left:-132px;width:300px;text-align:center;top:526.6px;font-size:12.5px;color:#444;font-weight:400;">12</div>
<div class="a" style="left:-132px;width:300px;text-align:center;top:546.6px;font-size:12.5px;color:#444;font-weight:400;">13</div>
<div class="a" style="left:-132px;width:300px;text-align:center;top:566.6px;font-size:12.5px;color:#444;font-weight:400;">14</div>
<div class="a" style="left:-132px;width:300px;text-align:center;top:586.6px;font-size:12.5px;color:#444;font-weight:400;">15</div>
<div class="a" style="left:-132px;width:300px;text-align:center;top:606.6px;font-size:12.5px;color:#444;font-weight:400;">16</div>
<div class="a" style="left:-132px;width:300px;text-align:center;top:626.6px;font-size:12.5px;color:#444;font-weight:400;">17</div>
<div class="a" style="left:-132px;width:300px;text-align:center;top:646.6px;font-size:12.5px;color:#444;font-weight:400;">18</div>
<div class="a" style="left:-132px;width:300px;text-align:center;top:666.6px;font-size:12.5px;color:#444;font-weight:400;">19</div>
<div class="a" style="left:-132px;width:300px;text-align:center;top:686.6px;font-size:12.5px;color:#444;font-weight:400;">20</div>
<div class="a" style="left:-132px;width:300px;text-align:center;top:706.6px;font-size:12.5px;color:#444;font-weight:400;">21</div>
<div class="a" style="left:-132px;width:300px;text-align:center;top:726.6px;font-size:12.5px;color:#444;font-weight:400;">22</div>
<div class="a" style="left:-132px;width:300px;text-align:center;top:746.6px;font-size:12.5px;color:#444;font-weight:400;">23</div>
<div class="a" style="left:-132px;width:300px;text-align:center;top:766.6px;font-size:12.5px;color:#444;font-weight:400;">24</div>
<div class="a" style="left:-132px;width:300px;text-align:center;top:786.6px;font-size:12.5px;color:#444;font-weight:400;">25</div>
<div class="a" style="left:-132px;width:300px;text-align:center;top:806.6px;font-size:12.5px;color:#444;font-weight:400;">26</div>
<div class="a" style="left:-132px;width:300px;text-align:center;top:826.6px;font-size:12.5px;color:#444;font-weight:400;">27</div>
<div class="a" style="left:-132px;width:300px;text-align:center;top:846.6px;font-size:12.5px;color:#444;font-weight:400;">28</div>
<div class="a" style="left:-132px;width:300px;text-align:center;top:866.6px;font-size:12.5px;color:#444;font-weight:400;">29</div>
<div class="a" style="left:-132px;width:300px;text-align:center;top:886.6px;font-size:12.5px;color:#444;font-weight:400;">30</div>
<div class="a" style="left:0px;top:889px;width:917px;height:16px;background:#f5f5f5;"></div>
<div class="a" style="left:37px;top:341px;width:516px;height:20px;background:#000;"></div>
<div class="a" style="left:37px;top:361px;width:516px;height:80px;background:#ddebf7;"></div>
<div class="a" style="left:37px;top:441px;width:516px;height:20px;background:#000;"></div>
<div class="a" style="left:118px;top:361px;width:1px;height:80px;background:#c9d6e6;"></div>
<div class="a" style="left:346px;top:361px;width:1px;height:80px;background:#c9d6e6;"></div>
<div class="a" style="left:428px;top:361px;width:1px;height:80px;background:#c9d6e6;"></div>
<div class="a " style="left:39.5px;top:345.7px;font-size:13px;color:#fff;font-weight:400;">Territory</div>
<div class="a " style="left:121px;top:345.7px;font-size:13px;color:#fff;font-weight:400;">Customer</div>
<div class="a " style="left:349px;top:345.7px;font-size:13px;color:#fff;font-weight:400;">Total</div>
<div class="a " style="left:431px;top:345.7px;font-size:13px;color:#fff;font-weight:400;">Sum of $ Total</div>
<div class="a" style="left:100px;top:343px;width:16px;height:16px;background:#fff;border-radius:1px"></div>
<svg class="a" style="left:104px;top:349px;" width="8" height="5" viewBox="0 0 8 5"><path d="M0.8 0.8 L4 4 L7.2 0.8" stroke="#333" stroke-width="1.2" fill="none"/></svg>
<div class="a" style="left:328px;top:343px;width:16px;height:16px;background:#fff;border-radius:1px"></div>
<svg class="a" style="left:332px;top:349px;" width="8" height="5" viewBox="0 0 8 5"><path d="M0.8 0.8 L4 4 L7.2 0.8" stroke="#333" stroke-width="1.2" fill="none"/></svg>
<div class="a" style="left:40px;top:368px;width:9px;height:9px;background:#fff;border:1px solid #333;box-sizing:border-box"></div>
<svg class="a" style="left:40px;top:368px;" width="9" height="9" viewBox="0 0 9 9"><path d="M4.5 2 V7 M2 4.5 H7" stroke="#000" stroke-width="1"/></svg>
<div class="a " style="left:51.5px;top:365.7px;font-size:13px;color:#000;font-weight:700;letter-spacing:-0.4px">EMEA</div>
<div class="a" style="right:854.5px;top:365.7px;font-size:13px;color:#000;font-weight:400;">$1,112,935</div>
<div class="a" style="left:430px;top:363px;width:59px;height:16px;background:#5b87c5;"></div>
<div class="a" style="right:729.5px;top:365.7px;font-size:13px;color:#000;font-weight:400;">47.79%</div>
<div class="a" style="left:40px;top:388px;width:9px;height:9px;background:#fff;border:1px solid #333;box-sizing:border-box"></div>
<svg class="a" style="left:40px;top:388px;" width="9" height="9" viewBox="0 0 9 9"><path d="M4.5 2 V7 M2 4.5 H7" stroke="#000" stroke-width="1"/></svg>
<div class="a " style="left:51.5px;top:385.7px;font-size:13px;color:#000;font-weight:700;letter-spacing:-0.4px">NA</div>
<div class="a" style="right:854.5px;top:385.7px;font-size:13px;color:#000;font-weight:400;">$872,985</div>
<div class="a" style="left:430px;top:383px;width:45px;height:16px;background:#5b87c5;"></div>
<div class="a" style="right:729.5px;top:385.7px;font-size:13px;color:#000;font-weight:400;">37.48%</div>
<div class="a" style="left:40px;top:408px;width:9px;height:9px;background:#fff;border:1px solid #333;box-sizing:border-box"></div>
<svg class="a" style="left:40px;top:408px;" width="9" height="9" viewBox="0 0 9 9"><path d="M4.5 2 V7 M2 4.5 H7" stroke="#000" stroke-width="1"/></svg>
<div class="a " style="left:51.5px;top:405.7px;font-size:13px;color:#000;font-weight:700;letter-spacing:-0.4px">APAC</div>
<div class="a" style="right:854.5px;top:405.7px;font-size:13px;color:#000;font-weight:400;">$198,383</div>
<div class="a" style="left:430px;top:403px;width:11px;height:16px;background:#5b87c5;"></div>
<div class="a" style="right:729.5px;top:405.7px;font-size:13px;color:#000;font-weight:400;">8.52%</div>
<div class="a" style="left:40px;top:428px;width:9px;height:9px;background:#fff;border:1px solid #333;box-sizing:border-box"></div>
<svg class="a" style="left:40px;top:428px;" width="9" height="9" viewBox="0 0 9 9"><path d="M4.5 2 V7 M2 4.5 H7" stroke="#000" stroke-width="1"/></svg>
<div class="a " style="left:51.5px;top:425.7px;font-size:13px;color:#000;font-weight:700;letter-spacing:-0.4px">Japan</div>
<div class="a" style="right:854.5px;top:425.7px;font-size:13px;color:#000;font-weight:400;">$144,734</div>
<div class="a" style="left:430px;top:423px;width:7px;height:16px;background:#5b87c5;"></div>
<div class="a" style="right:729.5px;top:425.7px;font-size:13px;color:#000;font-weight:400;">6.21%</div>
<div class="a " style="left:39.5px;top:445.7px;font-size:13px;color:#fff;font-weight:400;">Grand Total</div>
<div class="a" style="right:854.5px;top:445.7px;font-size:13px;color:#fff;font-weight:400;">$2,329,037</div>
<div class="a" style="left:430px;top:443px;width:122px;height:16px;background:#5f8ac6;"></div>
<div class="a" style="right:729.5px;top:445.7px;font-size:13px;color:#fff;font-weight:400;">100.00%</div>
<div class="a" style="left:582px;top:325px;width:194px;height:278px;background:#fff;border:2px solid #14606f;box-sizing:border-box"></div>
<div class="a" style="left:584px;top:352px;width:190px;height:1px;background:#5a72ac;"></div>
<div class="a " style="left:593.5px;top:332.2px;font-size:15px;color:#000;font-weight:700;letter-spacing:0.75px">Category</div>
<svg class="a" style="left:722px;top:332px;" width="18" height="18" viewBox="0 0 18 18"><rect x="0.5" y="0.5" width="17" height="17" fill="#f8e38c" stroke="#4d6fb0"/><path d="M2.5 4 L4 5.5 L6.5 2.5 M2.5 9 L4 10.5 L6.5 7.5 M2.5 14 L4 15.5 L6.5 12.5" stroke="#4b7b3a" stroke-width="1" fill="none"/><path d="M8 4.5 H15.5 M8 9.5 H15.5 M8 14.5 H15.5" stroke="#333" stroke-width="1.2"/></svg>
<svg class="a" style="left:748px;top:333px;" width="16" height="17" viewBox="0 0 16 17"><path d="M0.5 1 H12 L7.5 6.5 V11 L5.5 11 V6.5 Z" fill="#666"/><path d="M8 9 L15 16 M15 9 L8 16" stroke="#e8704a" stroke-width="1.4"/></svg>
<div class="a" style="left:593px;top:358px;width:172px;height:24px;background:#fff;border:1px solid #cfcfcf;box-sizing:border-box"></div>
<div class="a " style="left:600.5px;top:362.0px;font-size:15.4px;color:#000;font-weight:400;">Classic Cars</div>
<div class="a" style="left:593px;top:385px;width:172px;height:24px;background:#fff;border:1px solid #cfcfcf;box-sizing:border-box"></div>
<div class="a " style="left:600.5px;top:389.0px;font-size:15.4px;color:#000;font-weight:400;">Motorcycles</div>
<div class="a" style="left:593px;top:412px;width:172px;height:24px;background:#b4c7e7;border:1px solid #8e98a6;box-sizing:border-box"></div>
<div class="a " style="left:600.5px;top:416.0px;font-size:15.4px;color:#000;font-weight:400;">Planes</div>
<div class="a" style="left:593px;top:439px;width:172px;height:24px;background:#b4c7e7;border:1px solid #8e98a6;box-sizing:border-box"></div>
<div class="a " style="left:600.5px;top:443.0px;font-size:15.4px;color:#000;font-weight:400;">Ships</div>
<div class="a" style="left:593px;top:466px;width:172px;height:24px;background:#b4c7e7;border:1px solid #8e98a6;box-sizing:border-box"></div>
<div class="a " style="left:600.5px;top:470.0px;font-size:15.4px;color:#000;font-weight:400;">Trains</div>
<div class="a" style="left:593px;top:493px;width:172px;height:24px;background:#b4c7e7;border:1px solid #8e98a6;box-sizing:border-box"></div>
<div class="a " style="left:600.5px;top:497.0px;font-size:15.4px;color:#000;font-weight:400;">Trucks and Buses</div>
<div class="a" style="left:593px;top:520px;width:172px;height:24px;background:#fff;border:1px solid #cfcfcf;box-sizing:border-box"></div>
<div class="a " style="left:600.5px;top:524.0px;font-size:15.4px;color:#000;font-weight:400;">Vintage Cars</div>
<svg class="a" style="left:577.5px;top:320.5px;" width="10" height="10" viewBox="0 0 10 10"><circle cx="5" cy="5" r="3.6" fill="#fff" stroke="#555" stroke-width="1"/></svg>
<svg class="a" style="left:770px;top:320.5px;" width="10" height="10" viewBox="0 0 10 10"><circle cx="5" cy="5" r="3.6" fill="#fff" stroke="#555" stroke-width="1"/></svg>
<svg class="a" style="left:577.5px;top:597.5px;" width="10" height="10" viewBox="0 0 10 10"><circle cx="5" cy="5" r="3.6" fill="#fff" stroke="#555" stroke-width="1"/></svg>
<svg class="a" style="left:770px;top:597.5px;" width="10" height="10" viewBox="0 0 10 10"><circle cx="5" cy="5" r="3.6" fill="#fff" stroke="#555" stroke-width="1"/></svg>
<svg class="a" style="left:675.5px;top:321.5px;" width="7" height="7" viewBox="0 0 7 7"><rect x="0.5" y="0.5" width="6" height="6" fill="#fff" stroke="#555" stroke-width="1"/></svg>
<svg class="a" style="left:675.5px;top:600.5px;" width="7" height="7" viewBox="0 0 7 7"><rect x="0.5" y="0.5" width="6" height="6" fill="#fff" stroke="#555" stroke-width="1"/></svg>
<svg class="a" style="left:578.5px;top:461.5px;" width="7" height="7" viewBox="0 0 7 7"><rect x="0.5" y="0.5" width="6" height="6" fill="#fff" stroke="#555" stroke-width="1"/></svg>
<svg class="a" style="left:772.5px;top:461.5px;" width="7" height="7" viewBox="0 0 7 7"><rect x="0.5" y="0.5" width="6" height="6" fill="#fff" stroke="#555" stroke-width="1"/></svg>
<svg class="a" style="left:627px;top:383px;" width="12" height="18" viewBox="0 0 12 18"><path d="M1 1 V14 L4 11 L6.5 16.5 L8.5 15.5 L6 10 H10 Z" fill="#000" stroke="#fff" stroke-width="0.8"/></svg>
<div class="a" style="left:902px;top:302px;width:15px;height:587px;background:#f2f2f2;"></div>
<svg class="a" style="left:904px;top:306px;" width="10" height="8" viewBox="0 0 10 8"><path d="M1 6 L5 1.5 L9 6 Z" fill="#a6a6a6"/></svg>
<div class="a" style="left:904px;top:317px;width:11px;height:30px;background:#c1c1c1;"></div>
<svg class="a" style="left:904px;top:876px;" width="10" height="8" viewBox="0 0 10 8"><path d="M1 1.5 L5 6 L9 1.5 Z" fill="#555"/></svg>
<div class="a" style="left:37px;top:889px;width:880px;height:16px;background:#f0f0f0;"></div>
<svg class="a" style="left:40px;top:891px;" width="8" height="12" viewBox="0 0 8 12"><path d="M6 1 L1.5 6 L6 11 Z" fill="#a6a6a6"/></svg>
<div class="a" style="left:52px;top:891px;width:331px;height:11px;background:#c1c1c1;"></div>
<svg class="a" style="left:891px;top:891px;" width="8" height="12" viewBox="0 0 8 12"><path d="M1.5 1 L6 6 L1.5 11 Z" fill="#555"/></svg>
<div class="a" style="left:902px;top:889px;width:15px;height:16px;background:#dcdcdc;"></div>
<div class="a" style="left:917px;top:280px;width:322px;height:656px;background:#eeece8;"></div>
<div class="a" style="left:917px;top:280px;width:1px;height:656px;background:#d2d0ce;"></div>
<div class="a" style="left:1239px;top:280px;width:41px;height:656px;background:#f0efed;"></div>
<div class="a" style="left:1238px;top:280px;width:1px;height:656px;background:#d2d0ce;"></div>
<div class="a" style="left:1238px;top:320px;width:3px;height:40px;background:#107c41;"></div>
<svg class="a" style="left:1250px;top:289px;" width="18" height="18" viewBox="0 0 18 18"><circle cx="9" cy="9" r="8.6" fill="#3f7fc4"/><path d="M6.3 6.8 A2.8 2.8 0 1 1 10 9.3 C9.2 9.7 9 10.2 9 11" stroke="#fff" stroke-width="1.9" fill="none"/><circle cx="9" cy="13.8" r="1.2" fill="#fff"/></svg>
<svg class="a" style="left:1249px;top:332px;" width="19" height="17" viewBox="0 0 19 17"><rect x="6" y="1" width="6" height="4.5" fill="#f4a09a"/><rect x="6" y="10.5" width="7" height="5" fill="#f4a09a"/><rect x="6" y="5.5" width="6" height="5" fill="#4aa3e8"/><rect x="0.7" y="0.7" width="17.6" height="15.6" fill="none" stroke="#222" stroke-width="1.3"/><path d="M6 0.7 V16.3 M12.5 0.7 V16.3 M0.7 5.5 H18.3 M0.7 10.5 H18.3" stroke="#222" stroke-width="1.1"/><path d="M6 1 H12.5 V5.5 H6 Z M6 10.5 H12.5 V16 H6 Z" fill="none" stroke="#e0403a" stroke-width="1.1"/></svg>
<div class="a " style="left:934.5px;top:298.8px;font-size:15.3px;color:#252423;font-weight:700;">Conditional Formatting</div>
<svg class="a" style="left:1204px;top:300px;" width="14" height="14" viewBox="0 0 14 14"><path d="M1.5 1.5 L12.5 12.5 M12.5 1.5 L1.5 12.5" stroke="#323130" stroke-width="1.4"/></svg>
<div class="a " style="left:935.5px;top:349.1px;font-size:12.1px;color:#2b2a29;font-weight:400;-webkit-text-stroke:0.25px #2b2a29">Manage Rules in</div>
<div class="a " style="left:1032.5px;top:349.4px;font-size:11.9px;color:#2e7d5b;font-weight:400;">selection</div>
<svg class="a" style="left:1086px;top:351px;" width="12" height="8" viewBox="0 0 12 8"><path d="M1 1.5 L6 6.5 L11 1.5" stroke="#323130" stroke-width="1.2" fill="none"/></svg>
<svg class="a" style="left:1161px;top:344px;" width="17" height="17" viewBox="0 0 17 17"><path d="M8.5 1 V16 M1 8.5 H16" stroke="#111" stroke-width="1.15"/></svg>
<svg class="a" style="left:1196px;top:344px;" width="15" height="19" viewBox="0 0 15 19"><path d="M1 3.5 H14 M5 3.5 V1.5 H10 V3.5" stroke="#b3b0ad" stroke-width="1" fill="none"/><path d="M2.5 3.5 V17.5 H12.5 V3.5" stroke="#b3b0ad" stroke-width="1" fill="none"/><path d="M5.5 6 V15 M7.5 6 V15 M9.5 6 V15" stroke="#b3b0ad" stroke-width="0.9"/></svg>
<div class="a " style="left:935.5px;top:392.5px;font-size:11.85px;color:#323130;font-weight:400;">There are no rules to show for this selection</div>
<div class="a" style="left:0px;top:905px;width:917px;height:31px;background:#f5f5f5;"></div>
<div class="a" style="left:0px;top:936px;width:1280px;height:1px;background:#d8d8d8;"></div>
<svg class="a" style="left:12px;top:913px;" width="8" height="12" viewBox="0 0 8 12"><path d="M6.5 1 L1.5 6 L6.5 11" stroke="#c8c6c4" stroke-width="1" fill="none"/></svg>
<svg class="a" style="left:44px;top:913px;" width="8" height="12" viewBox="0 0 8 12"><path d="M1.5 1 L6.5 6 L1.5 11" stroke="#c8c6c4" stroke-width="1" fill="none"/></svg>
<svg class="a" style="left:74px;top:914px;" width="13" height="10" viewBox="0 0 13 10"><path d="M0 1 H12 M0 5 H12 M0 9.4 H12" stroke="#252423" stroke-width="1.2"/></svg>
<div class="a " style="left:106px;top:912.5px;font-size:13.4px;color:#323130;font-weight:400;">Dashboard</div>
<div class="a" style="left:186px;top:907px;width:79px;height:26px;background:#2f5597;border-radius:2px"></div>
<div class="a " style="left:193px;top:912.5px;font-size:13.4px;color:#fff;font-weight:400;">Employees</div>
<div class="a" style="left:273px;top:907px;width:71px;height:26px;background:#548235;border-radius:2px"></div>
<div class="a " style="left:279px;top:912.5px;font-size:13.4px;color:#fff;font-weight:400;">Inventory</div>
<div class="a " style="left:358px;top:912.5px;font-size:13.4px;color:#323130;font-weight:400;">Categories</div>
<div class="a " style="left:443px;top:912.5px;font-size:13.4px;color:#323130;font-weight:700;letter-spacing:-0.3px">Sheet1</div>
<div class="a" style="left:442px;top:933px;width:45px;height:3px;background:#107c41;"></div>
<div class="a " style="left:506px;top:912.5px;font-size:13.4px;color:#323130;font-weight:400;">Sales Data</div>
<svg class="a" style="left:590px;top:913px;" width="13" height="13" viewBox="0 0 13 13"><path d="M6.5 0.5 V12.5 M0.5 6.5 H12.5" stroke="#323130" stroke-width="1.2"/></svg>
<div class="a" style="left:0px;top:937px;width:1280px;height:21px;background:#fff;"></div>
<div class="a" style="left:0px;top:958px;width:1280px;height:2px;background:#000;"></div>
<div class="a " style="left:14.4px;top:943.3px;font-size:10.9px;color:#323130;font-weight:400;">Working...</div>
<div class="a " style="left:82.5px;top:943.3px;font-size:10.9px;color:#323130;font-weight:400;">Workbook Statistics</div>
<svg class="a" style="left:978px;top:945px;" width="8" height="5" viewBox="0 0 8 5"><path d="M1 1 L4 4 L7 1" stroke="#323130" stroke-width="1.1" fill="none"/></svg>
<div class="a " style="left:1024.5px;top:943.3px;font-size:10.9px;color:#323130;font-weight:400;">Give Feedback to Microsoft</div>
<div class="a" style="left:1197px;top:948px;width:11px;height:1px;background:#323130;"></div>
<div class="a " style="left:1217.5px;top:943.3px;font-size:10.9px;color:#323130;font-weight:400;">100%</div>
<svg class="a" style="left:1250px;top:941px;" width="13" height="13" viewBox="0 0 13 13"><path d="M6.5 0.5 V12.5 M0.5 6.5 H12.5" stroke="#323130" stroke-width="1.2"/></svg>
<div class="a" style="left:1279px;top:0px;width:1px;height:960px;background:#000;"></div>

</body></html>
